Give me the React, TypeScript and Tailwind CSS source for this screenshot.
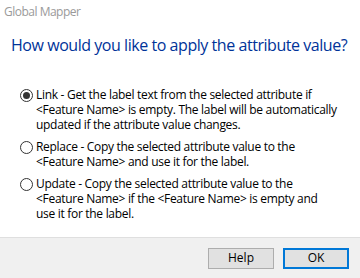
import React from "react";

const options = [
  {
    checked: true,
    lines: [
      "Link - Get the label text from the selected attribute if",
      "<Feature Name> is empty. The label will be automatically",
      "updated if the attribute value changes.",
    ],
  },
  {
    checked: false,
    lines: [
      "Replace - Copy the selected attribute value to the",
      "<Feature Name> and use it for the label.",
    ],
  },
  {
    checked: false,
    lines: [
      "Update - Copy the selected attribute value to the",
      "<Feature Name> if the <Feature Name> is empty and",
      "use it for the label.",
    ],
  },
];

function Radio({ checked }: { checked: boolean }) {
  return (
    <span className="mt-[2px] flex h-[13px] w-[13px] shrink-0 items-center justify-center rounded-full border border-[#333333] bg-white">
      {checked && <span className="h-[7px] w-[7px] rounded-full bg-[#333333]"></span>}
    </span>
  );
}

export default function App() {
  return (
    <div
      className="flex h-[278px] w-[360px] flex-col overflow-hidden bg-white text-black"
      style={{ fontFamily: '"Segoe UI", "Open Sans", "Noto Sans", sans-serif' }}
    >
      {/* window title */}
      <div className="mt-[4px] pl-[4px] text-[12px] leading-[16px] tracking-[-0.5px] text-[#9a9a9a]">Global Mapper</div>

      {/* main instruction */}
      <div className="mt-[14px] pl-[11px] text-[16px] leading-[22px] tracking-[-0.45px] whitespace-nowrap text-[#003399]">
        How would you like to apply the attribute value?
      </div>

      {/* choices */}
      <div className="mt-[31px] flex flex-col gap-[7px] pl-[20px]">
        {options.map((o, i) => (
          <div key={i} className="flex gap-[3px]">
            <Radio checked={o.checked} />
            <div className="text-[12px] leading-[15px] tracking-[-0.3px] whitespace-nowrap">
              {o.lines.map((l, j) => (
                <div key={j}>{l}</div>
              ))}
            </div>
          </div>
        ))}
      </div>

      <div className="flex-1"></div>

      {/* button bar */}
      <div className="flex h-[41px] items-center justify-end gap-[9px] border-t border-[#dfdfdf] bg-[#f0f0f0] pr-[11px]">
        <button className="h-[21px] w-[66px] border border-[#adadad] bg-[#e1e1e1] text-[12px] leading-none">Help</button>
        <button className="h-[21px] w-[66px] border-2 border-[#0078d7] bg-[#e1e1e1] text-[12px] leading-none">OK</button>
      </div>
    </div>
  );
}
